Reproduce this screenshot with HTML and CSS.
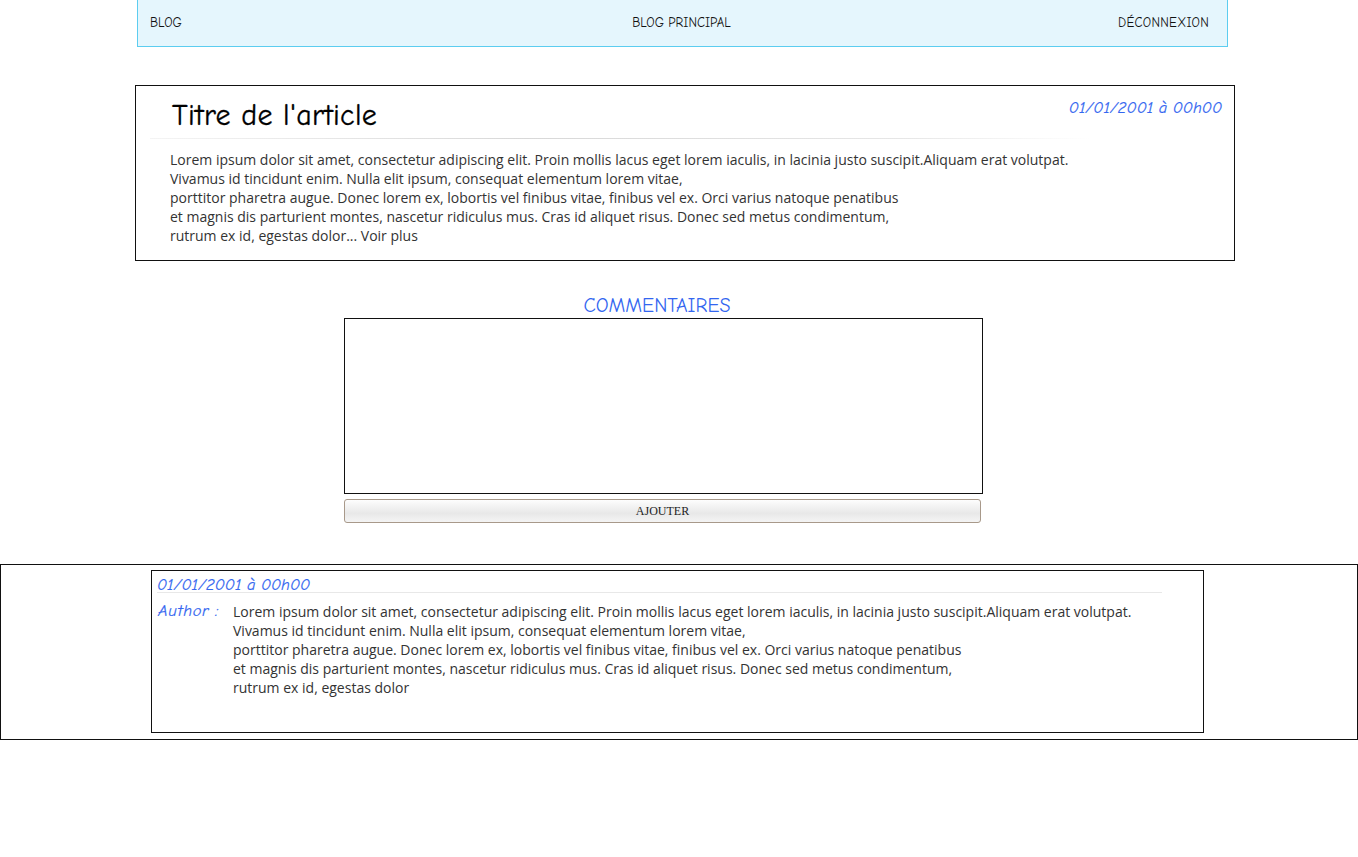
FILE: index.html
```html
<!DOCTYPE html>
<html lang="fr">
<head>
<meta charset="utf-8">
<title>Blog</title>
<link rel="stylesheet" href="styles.css">
</head>
<body>
<nav class="nav">
  <a class="nav-item nav-left">BLOG</a>
  <a class="nav-item nav-center">BLOG PRINCIPAL</a>
  <a class="nav-item nav-right">DÉCONNEXION</a>
</nav>

<article class="article">
  <header class="article-head">
    <h1 class="article-title">Titre de l'article</h1>
    <span class="date article-date">01/01/2001 à 00h00</span>
  </header>
  <div class="rule article-rule"></div>
  <p class="text article-text">Lorem ipsum dolor sit amet, consectetur adipiscing elit. Proin mollis lacus eget lorem iaculis, in lacinia justo suscipit.Aliquam erat volutpat.<br>Vivamus id tincidunt enim. Nulla elit ipsum, consequat elementum lorem vitae,<br>porttitor pharetra augue. Donec lorem ex, lobortis vel finibus vitae, finibus vel ex. Orci varius natoque penatibus<br>et magnis dis parturient montes, nascetur ridiculus mus. Cras id aliquet risus. Donec sed metus condimentum,<br>rutrum ex id, egestas dolor... Voir plus</p>
</article>

<section class="comment-form">
  <h2 class="comments-title">COMMENTAIRES</h2>
  <div class="textarea"></div>
  <button class="btn">AJOUTER</button>
</section>

<section class="comments">
  <div class="comment">
    <div class="date comment-date">01/01/2001 à 00h00</div>
    <div class="comment-body">
      <span class="author">Author :</span>
      <p class="text comment-text">Lorem ipsum dolor sit amet, consectetur adipiscing elit. Proin mollis lacus eget lorem iaculis, in lacinia justo suscipit.Aliquam erat volutpat.<br>Vivamus id tincidunt enim. Nulla elit ipsum, consequat elementum lorem vitae,<br>porttitor pharetra augue. Donec lorem ex, lobortis vel finibus vitae, finibus vel ex. Orci varius natoque penatibus<br>et magnis dis parturient montes, nascetur ridiculus mus. Cras id aliquet risus. Donec sed metus condimentum,<br>rutrum ex id, egestas dolor</p>
    </div>
  </div>
</section>
</body>
</html>
```

FILE: styles.css
```css
* { box-sizing: border-box; }

body {
  margin: 0;
  background: #ffffff;
  font-family: "Comic Sans MS", "Comic Neue", "DejaVu Sans", sans-serif;
  color: #000;
}

.nav {
  width: 1091px;
  height: 47px;
  margin-left: 137px;
  background: #e5f6fd;
  border: 1px solid #5ccdf0;
  border-top: none;
  display: grid;
  grid-template-columns: 1fr auto 1fr;
  align-items: center;
  padding: 0 18px 2px 12px;
}

.nav-item {
  font-size: 13px;
  color: #111;
}
.nav-left { justify-self: start; }
.nav-center { justify-self: center; padding-left: 4px; }
.nav-right { justify-self: end; letter-spacing: 0.3px; }

.article {
  width: 1100px;
  height: 176px;
  margin: 38px 0 0 135px;
  border: 1px solid #111;
  padding: 0 12px 0 34px;
}

.article-head {
  display: flex;
  justify-content: space-between;
  align-items: flex-start;
  height: 52px;
}

.article-title {
  margin: 11px 0 0 2px;
  font-size: 30px;
  font-weight: normal;
  letter-spacing: 0.3px;
  line-height: 38px;
  color: #000;
  -webkit-text-stroke: 0.3px #000;
}

.date {
  font-style: italic;
  color: #3366f0;
  font-size: 16.5px;
  line-height: 20px;
  -webkit-text-stroke: 0.2px #3366f0;
}

.article-date { margin-top: 12px; }

.rule {
  height: 1px;
  background: linear-gradient(to right, #f4f4f4, #d8d8d8 40%, #e6e6e6 80%, #ffffff);
}

.article-rule {
  width: 940px;
  margin-left: -20px;
}

.text {
  font-family: "Open Sans", "Noto Sans", sans-serif;
  font-size: 14px;
  line-height: 19px;
  color: #333;
  margin: 0;
}

.article-text { margin-top: 11px; }

.comment-form {
  width: 639px;
  margin: 33px 0 0 344px;
  display: flex;
  flex-direction: column;
}

.comments-title {
  margin: 0;
  text-align: center;
  font-weight: normal;
  font-size: 20px;
  line-height: 24px;
  color: #3366f0;
  padding-right: 13px;
}

.textarea {
  height: 176px;
  border: 1px solid #111;
  background: #fff;
}

.btn {
  width: 637px;
  height: 24px;
  margin-top: 5px;
  border: 1px solid #a8998a;
  border-radius: 3px;
  background: linear-gradient(to bottom, #fdfdfd 0%, #e8e8e8 60%, #f4f4f4 100%);
  font-family: "Liberation Serif", "Times New Roman", serif;
  font-size: 12px;
  color: #222;
  padding: 0;
}

.comments {
  margin-top: 41px;
  height: 176px;
  border: 1px solid #111;
  padding: 5px 0 0 150px;
}

.comment {
  width: 1053px;
  height: 163px;
  border: 1px solid #111;
  padding: 4px 0 0 5px;
}

.comment-date {
  width: 1005px;
  height: 18px;
  border-bottom: 1px solid #e8e8e8;
}

.comment-body {
  display: flex;
  margin-top: 8px;
}

.author {
  width: 76px;
  flex: none;
  font-style: italic;
  color: #3366f0;
  font-size: 16.5px;
  line-height: 20px;
  padding-left: 1px;
  letter-spacing: 0.6px;
  -webkit-text-stroke: 0.2px #3366f0;
}

.comment-text { margin-top: 1px; }
```
